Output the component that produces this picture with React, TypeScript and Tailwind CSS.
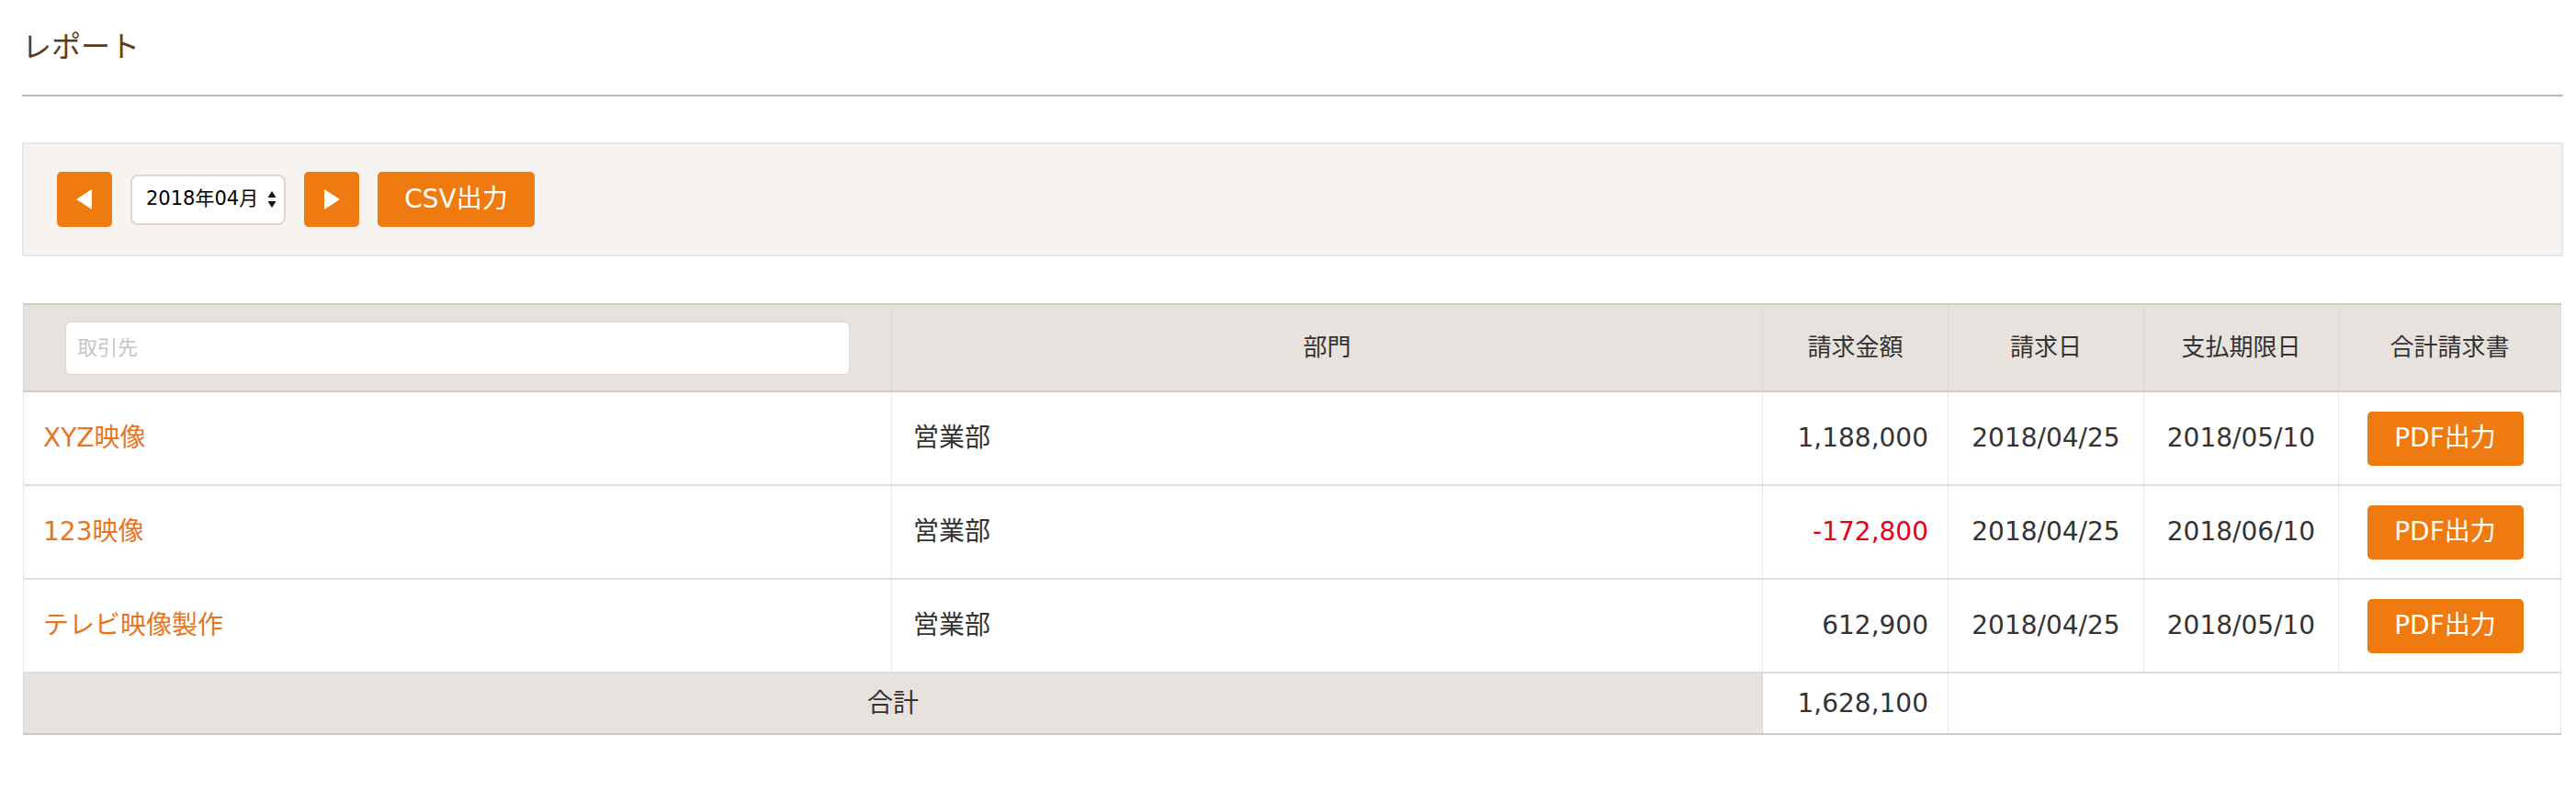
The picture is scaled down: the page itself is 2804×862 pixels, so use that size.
import React from "react";

const ORANGE = "bg-[#ef7a10]";

function TriLeft() {
  return (
    <svg width="18" height="22" viewBox="0 0 18 22">
      <polygon points="17,0 17,22 0,11" fill="#ffffff" />
    </svg>
  );
}
function TriRight() {
  return (
    <svg width="18" height="22" viewBox="0 0 18 22">
      <polygon points="1,0 1,22 18,11" fill="#ffffff" />
    </svg>
  );
}
function UpDown() {
  return (
    <svg width="10" height="20" viewBox="0 0 10 20">
      <polygon points="5,1 9.5,8 0.5,8" fill="#111" />
      <polygon points="0.5,12 9.5,12 5,19" fill="#111" />
    </svg>
  );
}

type Row = { name: string; dept: string; amount: string; neg?: boolean; date: string; due: string };

const rows: Row[] = [
  { name: "XYZ映像", dept: "営業部", amount: "1,188,000", date: "2018/04/25", due: "2018/05/10" },
  { name: "123映像", dept: "営業部", amount: "-172,800", neg: true, date: "2018/04/25", due: "2018/06/10" },
  { name: "テレビ映像製作", dept: "営業部", amount: "612,900", date: "2018/04/25", due: "2018/05/10" },
];

export default function App() {
  return (
    <div
      className="w-[2804px] h-[862px] bg-white pl-[24px] pr-[14px] text-[#333333]"
      style={{ fontFamily: '"DejaVu Sans", "Noto Sans CJK JP", sans-serif' }}
    >
      <div className="pt-[31px] h-[103px]">
        <h1 className="text-[32px] leading-[40px] text-[#5b3d24] font-normal">レポート</h1>
      </div>
      <div className="h-[2px] bg-[#c6bbae]" />

      <div className="mt-[50px] border-2 border-[#ebe7e2] bg-[#f6f3f0] px-[36px] py-[30px] flex items-center">
        <div className="flex items-center gap-[20px]">
          <button className={`w-[60px] h-[60px] rounded-[5px] ${ORANGE} flex items-center justify-center`}>
            <TriLeft />
          </button>
          <div className="w-[169px] h-[55px] rounded-[8px] border-2 border-[#dcd7d2] bg-white flex items-center pl-[15px] pr-[8px] text-[21px] text-black whitespace-nowrap">
            <span>2018年04月</span>
            <span className="ml-auto flex items-center">
              <UpDown />
            </span>
          </div>
          <button className={`w-[60px] h-[60px] rounded-[5px] ${ORANGE} flex items-center justify-center`}>
            <TriRight />
          </button>
          <button className={`w-[171px] h-[60px] rounded-[5px] ${ORANGE} text-white text-[28px] flex items-center justify-center`}>
            CSV出力
          </button>
        </div>
      </div>

      <table className="mt-[51px] ml-[1px] w-[2762px] table-fixed border-collapse text-[28px]">
        <colgroup>
          <col className="w-[945px]" />
          <col className="w-[948px]" />
          <col className="w-[202px]" />
          <col className="w-[213px]" />
          <col className="w-[212px]" />
          <col className="w-[242px]" />
        </colgroup>
        <thead>
          <tr className="bg-[#e8e2de] h-[95px]">
            <th className="border-t-2 border-b-2 border-x border-t-[#d3ccc5] border-b-[#d3ccc5] border-x-[#ddd7d2] px-[45px] font-normal">
              <input
                placeholder="取引先"
                className="w-full h-[58px] rounded-[6px] border border-[#dcd7d2] bg-white px-[12px] text-[22px] outline-none placeholder:text-[#c6c6c6]"
              />
            </th>
            {["部門", "請求金額", "請求日", "支払期限日", "合計請求書"].map((h) => (
              <th
                key={h}
                className="border-t-2 border-b-2 border-x border-t-[#d3ccc5] border-b-[#d3ccc5] border-x-[#ddd7d2] font-normal text-center text-[26px] text-[#333333]"
              >
                {h}
              </th>
            ))}
          </tr>
        </thead>
        <tbody>
          {rows.map((r) => (
            <tr key={r.name} className="h-[102px]">
              <td className="border-b-2 border-x border-b-[#e2ddd8] border-x-[#ebe7e3] px-[21px] text-[#e8751d]">
                {r.name}
              </td>
              <td className="border-b-2 border-x border-b-[#e2ddd8] border-x-[#ebe7e3] px-[23px]">{r.dept}</td>
              <td
                className={`border-b-2 border-x border-b-[#e2ddd8] border-x-[#ebe7e3] px-[21px] text-right ${
                  r.neg ? "text-[#e60012]" : ""
                }`}
              >
                {r.amount}
              </td>
              <td className="border-b-2 border-x border-b-[#e2ddd8] border-x-[#ebe7e3] text-center">{r.date}</td>
              <td className="border-b-2 border-x border-b-[#e2ddd8] border-x-[#ebe7e3] text-center">{r.due}</td>
              <td className="border-b-2 border-x border-b-[#e2ddd8] border-x-[#ebe7e3] text-center">
                <button className={`w-[170px] h-[59px] rounded-[5px] ${ORANGE} text-white text-[28px] ml-[-10px]`}>
                  PDF出力
                </button>
              </td>
            </tr>
          ))}
        </tbody>
        <tfoot>
          <tr className="h-[67px]">
            <td colSpan={2} className="bg-[#e8e2de] border-b-2 border-x border-b-[#d0c9c2] border-x-[#ddd7d2] text-center">
              合計
            </td>
            <td className="border-b-2 border-x border-b-[#d0c9c2] border-x-[#ebe7e3] px-[21px] text-right">1,628,100</td>
            <td colSpan={3} className="border-b-2 border-x border-b-[#d0c9c2] border-x-[#ebe7e3]" />
          </tr>
        </tfoot>
      </table>
    </div>
  );
}
